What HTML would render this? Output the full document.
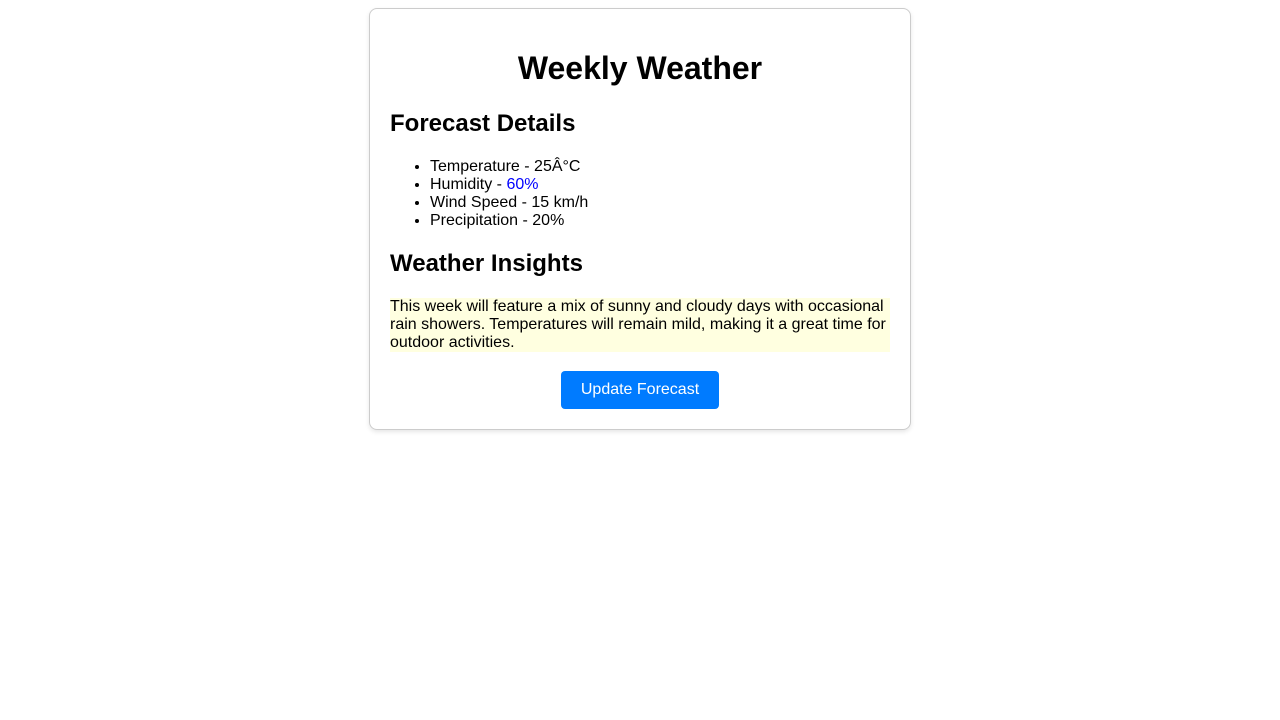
<!DOCTYPE html>
<html><head><meta charset="utf-8"><style>
body{margin:0;font-family:"Liberation Sans",Arial,sans-serif;background:#fff;color:#000}
.card{position:absolute;left:369px;top:8px;width:500px;padding:20px;border:1px solid #ccc;border-radius:8px;box-shadow:0 2px 5px rgba(0,0,0,0.1);height:380px}
h1{font-size:32px;text-align:center;margin:21px 0 0;line-height:37px}
h2{font-size:24px;margin:23px 0 0;line-height:28px}
h2.s{margin-top:20px}
ul{margin:20px 0 0;padding-left:40px;font-size:16px;line-height:18px}
p{background:#ffffe0;font-size:16px;line-height:18px;margin:20px 0 0}
.b{text-align:center;margin-top:19px}
button{background:#007bff;color:#fff;border:0;border-radius:4px;font-size:16px;font-family:inherit;padding:10px 20px;height:38px}
</style></head><body>
<div class="card">
<h1>Weekly Weather</h1>
<h2>Forecast Details</h2>
<ul><li>Temperature - 25Â°C</li><li>Humidity - <span style="color:blue">60%</span></li><li>Wind Speed - 15 km/h</li><li>Precipitation - 20%</li></ul>
<h2 class="s">Weather Insights</h2>
<p>This week will feature a mix of sunny and cloudy days with occasional rain showers. Temperatures will remain mild, making it a great time for outdoor activities.</p>
<div class="b"><button>Update Forecast</button></div>
</div>
</body></html>
